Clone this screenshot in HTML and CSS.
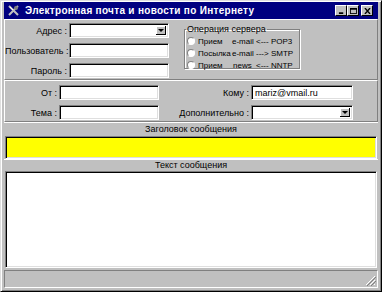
FILE: index.html
```html
<!DOCTYPE html>
<html lang="ru">
<head>
    <meta charset="UTF-8">
    <title>Электронная почта и новости по Интернету</title>
    <link rel="stylesheet" href="styles.css">
</head>
<body>

<div class="window">
    <div class="titlebar">
        <svg class="app-icon" width="13" height="13" viewBox="0 0 13 13">
            <rect x="0" y="0" width="13" height="13" fill="#000080"/>
            <path d="M2 2 L11 11 M11 2 L2 11" stroke="#c0c0c0" stroke-width="2"/>
            <path d="M3 3 L6 6" stroke="#fff" stroke-width="1"/>
            <circle cx="9" cy="4" r="2" fill="#808080"/>
        </svg>
        <span class="title">Электронная почта и новости по Интернету</span>
        <div class="controls">
            <span class="ctl"><svg width="8" height="7" viewBox="0 0 8 7"><rect x="1" y="5" width="5" height="2" fill="#000"/></svg></span>
            <span class="ctl"><svg width="8" height="7" viewBox="0 0 8 7"><rect x="0.5" y="0.5" width="7" height="6" fill="none" stroke="#000"/><rect x="0" y="0" width="8" height="2" fill="#000"/></svg></span>
            <span class="ctl close"><svg width="8" height="7" viewBox="0 0 8 7"><path d="M1 0 L7 7 M7 0 L1 7" stroke="#000" stroke-width="1.6"/></svg></span>
        </div>
    </div>

    <div class="panel panel-server">
        <div class="login">
            <label>Адрес :</label>
            <div class="field combo"><span class="drop"></span></div>
            <label>Пользователь :</label>
            <div class="field"></div>
            <label>Пароль :</label>
            <div class="field"></div>
        </div>
        <fieldset class="group">
            <legend>Операция сервера</legend>
            <div class="radio-row"><span class="radio"></span><span>Прием</span><span>e-mail</span><span>&lt;--- POP3</span></div>
            <div class="radio-row"><span class="radio"></span><span>Посылка</span><span>e-mail</span><span>---&gt; SMTP</span></div>
            <div class="radio-row"><span class="radio"></span><span>Прием</span><span class="news">news</span><span>&lt;--- NNTP</span></div>
        </fieldset>
    </div>

    <div class="panel panel-addr">
        <label>От :</label>
        <div class="field"></div>
        <label>Кому :</label>
        <div class="field">mariz@vmail.ru</div>
        <label>Тема :</label>
        <div class="field"></div>
        <label>Дополнительно :</label>
        <div class="field combo"><span class="drop"></span></div>
    </div>

    <div class="caption">Заголовок сообщения</div>
    <div class="well headline"></div>
    <div class="caption caption-text">Текст сообщения</div>
    <div class="well message"></div>

    <div class="statusbar">
        <svg class="grip" width="11" height="11" viewBox="0 0 11 11">
            <path d="M10 1 L1 10 M10 5 L5 10 M10 9 L9 10" stroke="#fff" stroke-width="1"/>
            <path d="M11 2 L2 11 M11 6 L6 11" stroke="#808080" stroke-width="1"/>
        </svg>
    </div>
</div>

</body>
</html>
```

FILE: styles.css
```css
body {
    margin: 0;
    background: #fff;
    font-family: "Liberation Sans", Arial, sans-serif;
    font-size: 9px;
    color: #000;
}
.window {
    width: 382px;
    height: 292px;
    box-sizing: border-box;
    background: #c0c0c0;
    border: 1px solid #000;
    border-top-color: #dfdfdf;
    border-left-color: #dfdfdf;
    box-shadow: inset 1px 1px #fff, inset -1px -1px #808080;
    padding: 1px 3px 3px 3px;
    display: flex;
    flex-direction: column;
}
.titlebar {
    height: 17px;
    background: #000080;
    display: flex;
    align-items: center;
    padding: 0 5px 0 3px;
    flex-shrink: 0;
}
.app-icon {
    margin-right: 5px;
}
.title {
    color: #fff;
    font-weight: bold;
    font-size: 10px;
    letter-spacing: 0.3px;
    flex: 1;
}
.controls {
    display: flex;
}
.ctl {
    width: 12px;
    height: 11px;
    background: #c0c0c0;
    box-sizing: border-box;
    border: 1px solid #fff;
    border-right-color: #000;
    border-bottom-color: #000;
    display: flex;
    align-items: center;
    justify-content: center;
}
.ctl svg {
    width: 7px;
    height: 6px;
}
.ctl.close {
    margin-left: 2px;
}
.panel {
    border: 1px solid #fff;
    border-right-color: #808080;
    border-bottom-color: #808080;
    flex-shrink: 0;
}
.panel label {
    text-align: right;
    white-space: nowrap;
}
.field {
    height: 15px;
    box-sizing: border-box;
    background: #fff;
    border: 1px solid #808080;
    border-right-color: #fff;
    border-bottom-color: #fff;
    box-shadow: inset 1px 1px #000, inset -1px -1px #dfdfdf;
    padding: 2px 3px;
    font-size: 9px;
    line-height: 10px;
    position: relative;
}
.combo .drop {
    position: absolute;
    right: 2px;
    top: 2px;
    width: 10px;
    height: 9px;
    background: #c0c0c0;
    box-shadow: inset -1px -1px #000, inset 1px 1px #fff;
}
.combo .drop::after {
    content: "";
    position: absolute;
    left: 2px;
    top: 3px;
    border-left: 3px solid transparent;
    border-right: 3px solid transparent;
    border-top: 3px solid #000;
}
.panel-server {
    height: 61px;
    box-sizing: border-box;
    display: flex;
    padding-top: 3px;
}
.login {
    width: 165px;
    display: grid;
    grid-template-columns: 62px 100px;
    column-gap: 2px;
    row-gap: 5px;
    align-items: center;
    align-content: start;
}
.group {
    margin: 2px 0 0 14px;
    padding: 1px 0 2px 2px;
    width: 116px;
    height: 44px;
    box-sizing: border-box;
    border: 1px solid #808080;
    box-shadow: 1px 1px #fff, inset 1px 1px #fff;
    font-size: 8px;
    white-space: nowrap;
}
.group legend {
    padding: 0 1px;
    margin-left: -1px;
    line-height: 9px;
    font-size: 9px;
}
.radio-row {
    display: grid;
    grid-template-columns: 11px 34px 24px auto;
    align-items: center;
    height: 12px;
}
.radio-row .news {
    padding-left: 1px;
}
.radio {
    width: 8px;
    height: 8px;
    border-radius: 50%;
    background: #fff;
    border: 1px solid #808080;
    border-right-color: #fff;
    border-bottom-color: #fff;
    box-sizing: border-box;
}
.panel-addr {
    height: 42px;
    box-sizing: border-box;
    padding: 4px 0 0 0;
    display: grid;
    grid-template-columns: 52px 100px 88px 102px;
    column-gap: 2px;
    row-gap: 5px;
    align-content: start;
    align-items: center;
}
.caption {
    height: 12px;
    line-height: 12px;
    text-align: center;
    border-top: 1px solid #fff;
    margin-bottom: 1px;
    flex-shrink: 0;
}
.caption-text {
    height: 11px;
    line-height: 11px;
    margin-bottom: 0;
}
.well {
    box-sizing: border-box;
    border: 1px solid #808080;
    border-right-color: #fff;
    border-bottom-color: #fff;
    box-shadow: inset 1px 1px #000, inset -1px -1px #dfdfdf;
    margin: 0 1px;
}
.headline {
    height: 23px;
    background: #ffff00;
    flex-shrink: 0;
}
.message {
    flex: 1;
    background: #fff;
}
.statusbar {
    height: 16px;
    margin-top: 2px;
    border: 1px solid #808080;
    border-right-color: #fff;
    border-bottom-color: #fff;
    display: flex;
    justify-content: flex-end;
    align-items: flex-end;
    flex-shrink: 0;
}
.grip {
    margin: 0 1px 1px 0;
}
```
